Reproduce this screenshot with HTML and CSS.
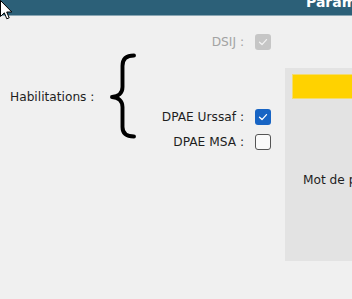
FILE: index.html
```html
<!DOCTYPE html>
<html lang="fr">
<head>
    <meta charset="UTF-8">
    <meta name="viewport" content="width=device-width, initial-scale=1.0">
    <title>Paramètres</title>
    <link rel="stylesheet" href="styles.css">
</head>
<body>
    <div class="page">
        <header class="topbar">
            <span class="topbar-title">Paramètres</span>
        </header>

        <div class="content">
            <section class="rights">
                <div class="field field-disabled">
                    <span class="field-label">DSIJ :</span>
                    <span class="check check-disabled">
                        <svg viewBox="0 0 16 16" width="16" height="16"><path d="M4.5 8.3 L7 10.6 L11.5 5.6" fill="none" stroke="#f2f2f2" stroke-width="1.3" stroke-linecap="round" stroke-linejoin="round"/></svg>
                    </span>
                </div>

                <div class="habil">
                    <span class="habil-label">Habilitations :</span>
                    <svg class="brace" viewBox="0 0 27 86" width="27" height="86">
                        <path d="M25 2.5 C17.5 2.5 13.5 6 13.5 13 L13.5 34 C13.5 40 9.5 43.5 3 44 C9.5 44.5 13.5 48 13.5 54 L13.5 74 C13.5 80.5 17.5 83.5 25 83.5" fill="none" stroke="#000" stroke-width="3.9" stroke-linecap="round" stroke-linejoin="round"/>
                    </svg>
                    <div class="habil-fields">
                        <div class="field">
                            <span class="field-label">DPAE Urssaf :</span>
                            <span class="check check-on">
                                <svg viewBox="0 0 16 16" width="16" height="16"><path d="M4.5 8.3 L7 10.6 L11.5 5.6" fill="none" stroke="#fff" stroke-width="1.3" stroke-linecap="round" stroke-linejoin="round"/></svg>
                            </span>
                        </div>
                        <div class="field">
                            <span class="field-label">DPAE MSA :</span>
                            <span class="check check-off"></span>
                        </div>
                    </div>
                </div>
            </section>

            <section class="panel">
                <div class="panel-banner"></div>
                <div class="panel-row">Mot de passe :</div>
            </section>
        </div>

        <svg class="cursor" viewBox="0 0 13 20" width="13" height="20">
            <path d="M0.5 0.5 L0.5 16.5 L4.3 12.8 L6.8 18.8 L9.2 17.8 L6.7 12 L11.8 12 Z" fill="#fff" stroke="#000" stroke-width="1" stroke-linejoin="round"/>
        </svg>
    </div>
</body>
</html>
```

FILE: styles.css
```css
:root {
    --bar: #2c6078;
    --bar-line: #8aa6b3;
    --bg: #f0f0f0;
    --panel: #e3e3e3;
    --yellow: #ffd200;
    --text: #1e1e1e;
    --muted: #a3a3a3;
    --blue: #1764c4;
}

* {
    margin: 0;
    padding: 0;
    box-sizing: border-box;
}

body {
    font-family: 'DejaVu Sans', sans-serif;
    font-size: 12.2px;
    background-color: var(--bg);
    color: var(--text);
    overflow: hidden;
}

.page {
    position: relative;
    width: 352px;
    height: 299px;
    overflow: hidden;
}

.topbar {
    height: 16px;
    background-color: var(--bar);
    border-bottom: 1px solid var(--bar-line);
    overflow: hidden;
    white-space: nowrap;
    padding-left: 306px;
}

.topbar-title {
    display: block;
    margin-top: -6px;
    color: #fff;
    font-weight: 700;
    font-size: 14px;
    line-height: 16px;
}

.content {
    display: flex;
    align-items: flex-start;
}

.rights {
    width: 285px;
    flex-shrink: 0;
    padding-top: 18px;
    padding-right: 14px;
}

.field {
    display: flex;
    justify-content: flex-end;
    align-items: center;
    gap: 11px;
    height: 16px;
}

.field-disabled {
    color: var(--muted);
}

.check {
    display: block;
    width: 16px;
    height: 16px;
    border-radius: 3px;
}

.check svg {
    display: block;
}

.check-disabled {
    background-color: #c6c6c6;
}

.check-on {
    background-color: var(--blue);
}

.check-off {
    background-color: #fafafa;
    border: 1px solid #555;
}

.habil {
    display: grid;
    grid-template-columns: 99px 27px 1fr;
    padding-left: 10px;
    margin-top: 3px;
}

.habil-label {
    margin-top: 37px;
    white-space: nowrap;
}

.brace {
    display: block;
}

.habil-fields {
    display: flex;
    flex-direction: column;
    gap: 9px;
    margin-top: 56px;
}

.panel {
    flex: 1;
    height: 193px;
    margin-top: 52px;
    background-color: var(--panel);
    padding: 6px 0 0 7px;
}

.panel-banner {
    height: 25px;
    background-color: var(--yellow);
    border: 1px solid #f3dc70;
    border-right: none;
}

.panel-row {
    margin-top: 74px;
    padding-left: 11px;
    white-space: nowrap;
}

.cursor {
    position: absolute;
    left: 0;
    top: 0;
}
```
